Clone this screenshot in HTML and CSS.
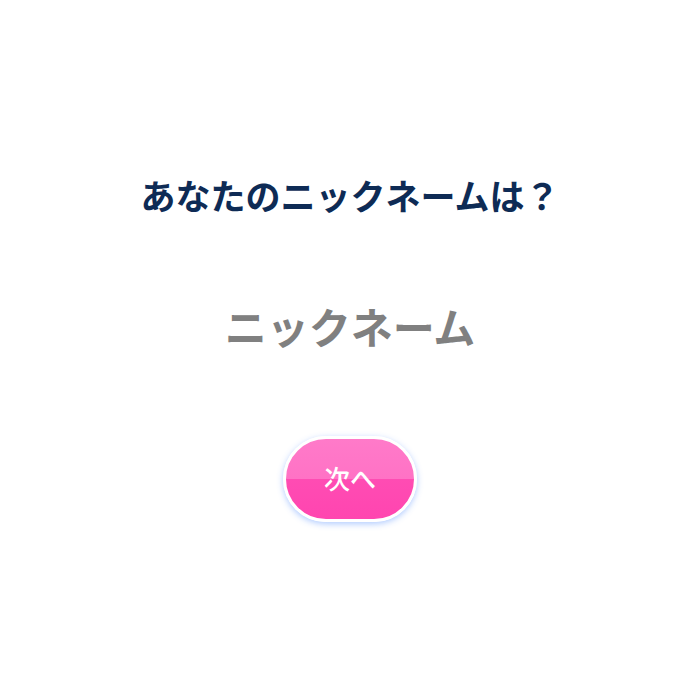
FILE: index.html
```html
<!DOCTYPE html>
<html lang="ja">
<head>
    <meta charset="UTF-8">
    <meta name="viewport" content="width=device-width, initial-scale=1.0">
    <title>ニックネーム</title>
    <link rel="stylesheet" href="styles.css">
</head>
<body>
    <div class="container">
        <h2 class="question">あなたのニックネームは？</h2>
        <form class="form" id="nicknameForm">
            <input type="text" name="nickname" placeholder="ニックネーム" class="nickname-input">
            <button type="submit" class="next-button">次へ</button>
        </form>
    </div>
</body>
</html>
```

FILE: styles.css
```css
body {
    font-family: "Noto Sans CJK JP", "Noto Sans", sans-serif;
    margin: 0;
    padding: 0;
    background-color: #FFFFFF;
}
.container {
    width: 700px;
    height: 700px;
    display: flex;
    flex-direction: column;
    align-items: center;
    padding-top: 170px;
    box-sizing: border-box;
}
.question {
    margin: 0;
    font-size: 35px;
    font-weight: 700;
    color: #0E2B55;
    line-height: 50px;
}
.form {
    display: flex;
    flex-direction: column;
    align-items: center;
}
.nickname-input {
    margin-top: 74px;
    width: 500px;
    height: 60px;
    border: none;
    outline: none;
    text-align: center;
    font-family: inherit;
    font-size: 42px;
    font-weight: 700;
    color: #333333;
    background: transparent;
}
.nickname-input::placeholder {
    color: #808080;
}
.next-button {
    margin-top: 80px;
    width: 134px;
    height: 86px;
    border: 3px solid #FFFFFF;
    border-radius: 43px;
    background: linear-gradient(#FF7AC9 0%, #FF72C5 50%, #FF4CB3 50%, #FF45B0 100%);
    color: #FFFFFF;
    font-family: inherit;
    font-size: 26px;
    font-weight: 500;
    padding: 0 0 4px;
    cursor: pointer;
    box-shadow: 0 2px 6px rgba(80, 140, 255, 0.45);
    box-sizing: border-box;
}
```
